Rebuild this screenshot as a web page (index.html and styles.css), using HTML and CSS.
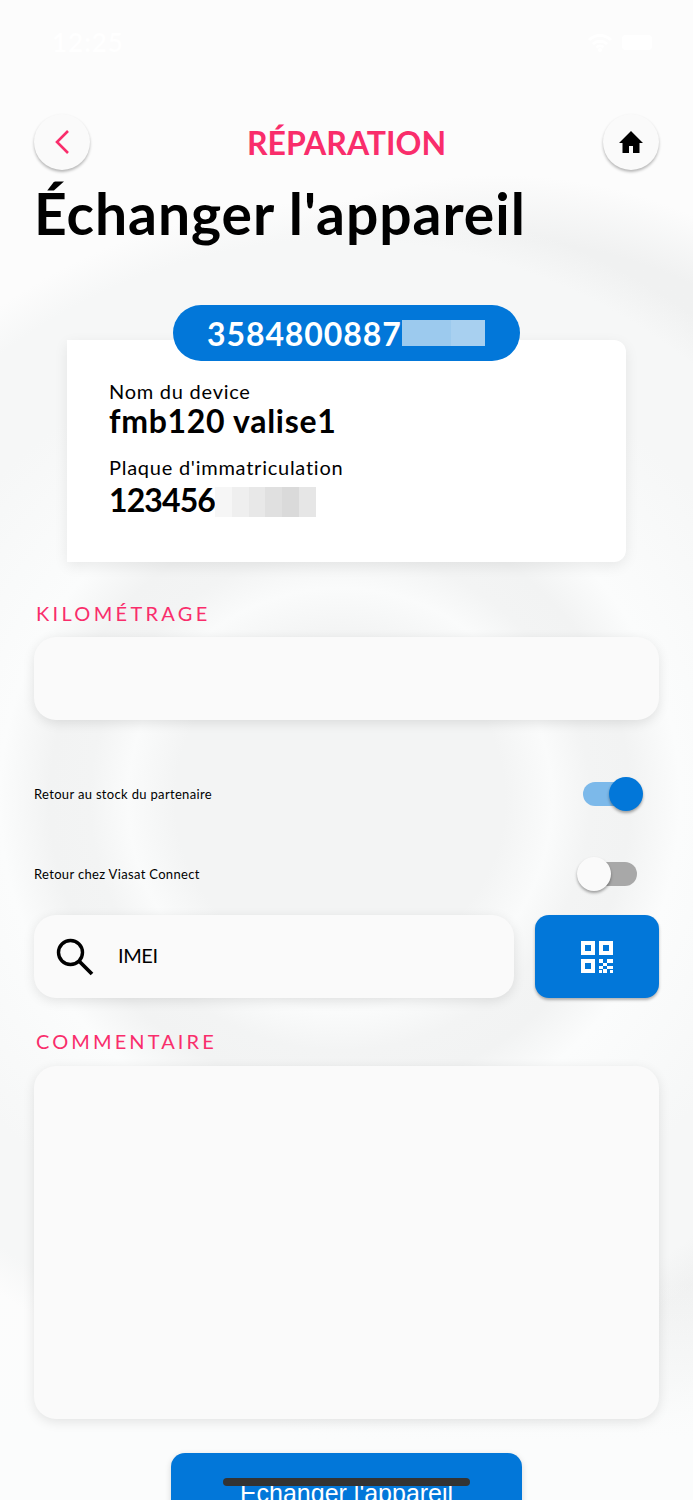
FILE: index.html

```html
<!DOCTYPE html>
<html lang="fr">
<head>
    <meta charset="UTF-8">
    <meta name="viewport" content="width=device-width, initial-scale=1.0">
    <title>Échanger l'appareil</title>
    <link rel="stylesheet" href="styles.css">
</head>
<body>
<div class="screen">
    <div class="status">
        <span class="clock">12:25</span>
        <div class="status-icons">
            <svg width="26" height="20" viewBox="0 0 26 20"><path d="M2 8a16 16 0 0 1 22 0M6 12a10.500 10.500 0 0 1 14 0M9.500 15.500a5 5 0 0 1 7 0" fill="none" stroke="#fff" stroke-width="3"/><circle cx="13" cy="18" r="2" fill="#fff"/></svg>
            <div class="battery"></div>
        </div>
    </div>

    <header class="topbar">
        <button class="round-btn">
            <svg width="18" height="26" viewBox="0 0 18 26"><path d="M15 2 4 13l11 11" fill="none" stroke="#f92d6b" stroke-width="2.600"/></svg>
        </button>
        <div class="section-title">RÉPARATION</div>
        <button class="round-btn">
            <svg width="26" height="24" viewBox="0 0 26 24"><path d="M13 1 1 13h3.500v10h6.500v-7h4v7h6.500V13H25z" fill="#000"/></svg>
        </button>
    </header>

    <h1>Échanger l'appareil</h1>

    <section class="device">
        <div class="imei-pill">
            <span>3584800887</span>
            <div class="blur blur-blue">
                <i></i><i></i><i></i><i></i><i></i>
            </div>
        </div>
        <div class="device-card">
            <div class="field-name">Nom du device</div>
            <div class="field-value">fmb120 valise1</div>
            <div class="field-name second">Plaque d'immatriculation</div>
            <div class="field-value plate">
                <span>123456</span>
                <div class="blur blur-grey">
                    <i></i><i></i><i></i><i></i><i></i><i></i>
                </div>
            </div>
        </div>
    </section>

    <div class="label km-label">KILOMÉTRAGE</div>
    <div class="box km-box"></div>

    <div class="switch-row first">
        <span>Retour au stock du partenaire</span>
        <div class="switch on"><div class="thumb"></div></div>
    </div>
    <div class="switch-row second-row">
        <span>Retour chez Viasat Connect</span>
        <div class="switch off"><div class="thumb"></div></div>
    </div>

    <div class="search-row">
        <div class="box search-box">
            <svg width="40" height="40" viewBox="0 0 40 40"><circle cx="15.500" cy="15.500" r="12" fill="none" stroke="#000" stroke-width="3.400"/><path d="m24 24 13 13" stroke="#000" stroke-width="3.800"/></svg>
            <span class="imei-hint">IMEI</span>
        </div>
        <button class="qr-btn">
            <svg width="32" height="32" viewBox="0 0 32 32" fill="#fff">
                <path fill-rule="evenodd" d="M0 0h14v14H0zM4 4v6h6V4zM18 0h14v14H18zM22 4v6h6V4zM0 18h14v14H0zM4 22v6h6v-6z"/>
                <path d="M18 18h4v4h-4zM26 18h6v4h-6zM22 22h4v3h-4zM18 25h4v3h-4zM26 25h6v3h-6zM22 28h4v4h-4zM29 29h3v3h-3zM18 29h3v3h-3z"/>
            </svg>
        </button>
    </div>

    <div class="label comment-label">COMMENTAIRE</div>
    <div class="box comment-box"></div>

    <button class="submit">Échanger l'appareil</button>

    <div class="home-bar"></div>
</div>
</body>
</html>
```

FILE: styles.css

```css
* {
    box-sizing: border-box;
}
html, body {
    margin: 0;
    padding: 0;
}
body {
    font-family: Lato, "Open Sans", sans-serif;
    color: #000;
}
.screen {
    position: relative;
    width: 693px;
    height: 1500px;
    overflow: hidden;
    padding: 0 34px;
    /* soft rings behind the form: bottom fade, inner rings, big outer arc */
    background:
        linear-gradient(to bottom, rgba(251, 252, 252, 0) 1280px, #fbfcfc 1440px),
        radial-gradient(circle at 340px 800px,
            #f3f4f4 0,
            #f3f4f4 165px,
            #fafbfb 212px,
            #f3f4f4 250px,
            #f2f3f3 290px,
            #fbfcfc 340px,
            #f6f7f7 470px,
            #f6f7f7 560px,
            rgba(246, 247, 247, 0) 600px),
        radial-gradient(ellipse 560px 655px at 500px 830px,
            #f1f2f2 0,
            #f0f1f1 90%,
            rgba(240, 241, 241, 0) 100%),
        #fcfcfc;
}

/* status bar */
.status {
    height: 114px;
    padding: 27px 0 0 18px;
    display: flex;
    justify-content: space-between;
    align-items: flex-start;
}
.clock {
    color: #fff;
    font-size: 26px;
    line-height: 30px;
    font-weight: 600;
    letter-spacing: 1px;
}
.status-icons {
    display: flex;
    align-items: center;
    gap: 9px;
    padding: 5px 7px 0 0;
}
.battery {
    width: 30px;
    height: 15px;
    border-radius: 4px;
    background: #fff;
}

/* top bar */
.topbar {
    display: flex;
    justify-content: space-between;
    align-items: center;
}
.round-btn {
    width: 56px;
    height: 56px;
    border: none;
    border-radius: 50%;
    padding: 0;
    background: #fafafa;
    box-shadow: 0 2px 3px rgba(0, 0, 0, 0.28);
    display: flex;
    align-items: center;
    justify-content: center;
}
.section-title {
    color: #f92d6b;
    font-size: 32px;
    font-weight: 700;
}
h1 {
    margin: 8px 0 0;
    font-size: 57px;
    line-height: 70px;
    font-weight: 700;
    letter-spacing: 0.95px;
}

/* device card */
.device {
    margin: 0 33px;
    padding-top: 57px;
}
.imei-pill {
    position: relative;
    z-index: 1;
    width: 347px;
    height: 56px;
    margin: 0 auto;
    border-radius: 28px;
    background: #0277d9;
    color: #fff;
    font-size: 32px;
    font-weight: 700;
    letter-spacing: 0.9px;
    display: flex;
    align-items: center;
    padding-left: 34px;
}
.blur {
    display: flex;
}
.blur i {
    flex: 1;
}
.blur-blue {
    width: 83px;
    height: 26px;
}
.blur-blue i {
    background: #9ccaee;
}
.blur-blue i:nth-child(4), .blur-blue i:nth-child(5) {
    background: #a8d0f0;
}
.device-card {
    margin-top: -21px;
    height: 222px;
    width: 559px;
    padding: 39px 42px 0;
    background: #fff;
    border-radius: 0 12px 12px 0;
    box-shadow: 0 4px 14px rgba(0, 0, 0, 0.08);
}
.field-name {
    font-size: 20px;
    line-height: 24px;
    letter-spacing: 0.75px;
}
.second {
    margin-top: 16px;
}
.field-value {
    font-size: 32px;
    line-height: 36px;
    font-weight: 700;
    letter-spacing: 0.7px;
}
.plate {
    display: flex;
    align-items: center;
    margin-top: 3px;
    letter-spacing: -0.9px;
}
.blur-grey {
    width: 101px;
    height: 30px;
    margin-top: 4px;
}
.blur-grey i:nth-child(1) { background: #f6f6f6; }
.blur-grey i:nth-child(2) { background: #efefef; }
.blur-grey i:nth-child(3) { background: #e8e8e8; }
.blur-grey i:nth-child(4) { background: #e0e0e0; }
.blur-grey i:nth-child(5) { background: #dadada; }
.blur-grey i:nth-child(6) { background: #e6e6e6; }

/* form */
.label {
    color: #f92d6b;
    font-size: 20px;
    line-height: 24px;
    padding-left: 2px;
}
.km-label {
    margin-top: 39px;
    letter-spacing: 3.3px;
}
.box {
    background: #fafafa;
    border-radius: 22px;
    box-shadow: 0 3px 12px rgba(0, 0, 0, 0.1);
}
.km-box {
    height: 83px;
    margin-top: 12px;
}
.switch-row {
    display: flex;
    align-items: center;
    justify-content: space-between;
    font-size: 13px;
    letter-spacing: 0.33px;
    height: 34px;
    padding-right: 22px;
}
.switch-row.first {
    margin-top: 57px;
}
.switch-row.second-row {
    margin-top: 46px;
}
.switch {
    width: 54px;
    height: 24px;
    border-radius: 12px;
    display: flex;
    align-items: center;
}
.switch.on {
    background: #7cb9ea;
    justify-content: flex-end;
}
.switch.off {
    background: #a8a8a8;
}
.thumb {
    flex: none;
    width: 34px;
    height: 34px;
    border-radius: 50%;
    box-shadow: 0 2px 3px rgba(0, 0, 0, 0.35);
}
.on .thumb {
    background: #0277d9;
    margin-right: -6px;
}
.off .thumb {
    background: #fafafa;
    margin-left: -6px;
}
.search-row {
    display: flex;
    gap: 21px;
    height: 83px;
    margin-top: 24px;
}
.search-box {
    flex: 1;
    display: flex;
    align-items: center;
    padding-left: 21px;
    gap: 23px;
    font-size: 20px;
    letter-spacing: -0.4px;
}
.imei-hint {
    margin-bottom: 3px;
}
.qr-btn {
    width: 124px;
    border: none;
    padding: 0;
    border-radius: 14px;
    background: #0277d9;
    box-shadow: 0 2px 3px rgba(0, 0, 0, 0.3);
    display: flex;
    align-items: center;
    justify-content: center;
}
.comment-label {
    margin-top: 31px;
    letter-spacing: 3.1px;
}
.comment-box {
    height: 353px;
    margin-top: 13px;
}
.submit {
    display: block;
    width: 351px;
    margin: 34px auto 0;
    border: none;
    border-radius: 14px;
    padding: 26px 0 25px;
    background: #0277d9;
    color: #fff;
    font-family: "Liberation Sans", Arial, sans-serif;
    font-size: 25px;
    line-height: 28px;
    text-align: center;
    box-shadow: 0 2px 6px rgba(0, 0, 0, 0.15);
}
.home-bar {
    position: absolute;
    left: 223px;
    top: 1478px;
    width: 247px;
    height: 8px;
    border-radius: 4px;
    background: #333;
}
```
